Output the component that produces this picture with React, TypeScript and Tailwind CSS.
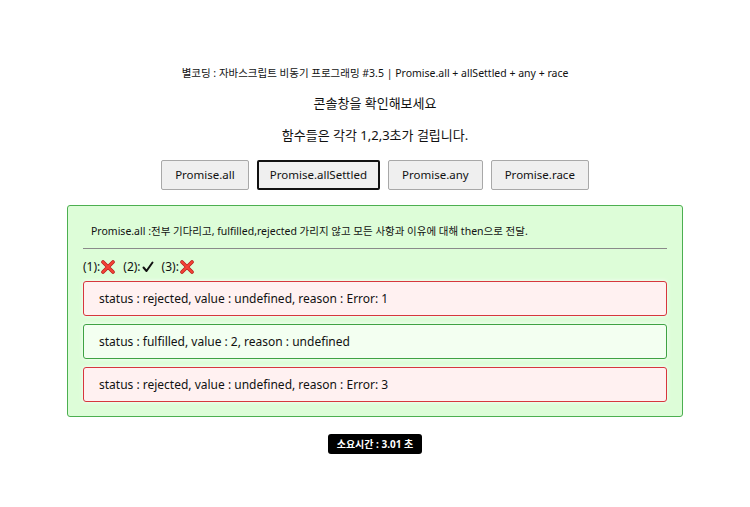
import React from "react";

interface Result {
  ok: boolean;
  text: string;
}

const results: Result[] = [
  { ok: false, text: "status : rejected, value : undefined, reason : Error: 1" },
  { ok: true, text: "status : fulfilled, value : 2, reason : undefined" },
  { ok: false, text: "status : rejected, value : undefined, reason : Error: 3" },
];

const buttons = ["Promise.all", "Promise.allSettled", "Promise.any", "Promise.race"];

const Cross = () => (
  <svg width="14" height="14" viewBox="0 0 14 14" className="inline-block">
    <path d="M2 2 L12 12 M12 2 L2 12" stroke="#b71c1c" strokeWidth="3.6" strokeLinecap="round" />
    <path d="M2 2 L12 12 M12 2 L2 12" stroke="#f44336" strokeWidth="2.2" strokeLinecap="round" />
  </svg>
);

const Check = () => (
  <svg width="12" height="12" viewBox="0 0 12 12" className="inline-block">
    <path d="M1.5 6.5 L4.5 10 L10.5 1.5" stroke="#111" strokeWidth="2" fill="none" strokeLinecap="round" strokeLinejoin="round" />
  </svg>
);

export default function App() {
  return (
    <div
      className="w-[750px] h-[507px] bg-white text-[#111] flex flex-col items-center"
      style={{ fontFamily: '"Noto Sans", "Noto Sans CJK KR", sans-serif' }}
    >
      <div className="mt-[64px] text-[10.5px] leading-[18px]">
        별코딩 : 자바스크립트 비동기 프로그래밍 #3.5 | Promise.all + allSettled + any + race
      </div>
      <div className="mt-[11px] text-[13px] leading-[20px]">콘솔창을 확인해보세요</div>
      <div className="mt-[12px] text-[13px] leading-[20px]">함수들은 각각 1,2,3초가 걸립니다.</div>

      <div className="mt-[15px] flex gap-[8px]">
        {buttons.map((b, i) => (
          <button
            key={b}
            className={`h-[30px] text-[11.5px] bg-[#efefef] rounded-[2px] ${
              i === 1 ? "px-[11px] border-2 border-[#111]" : "px-[13px] border border-[#a8a8a8]"
            }`}
          >
            {b}
          </button>
        ))}
      </div>

      <div className="mt-[15px] w-[616px] h-[212px] bg-[#ddfdd8] border border-[#4caf50] rounded-[3px] px-[15px] pt-[16px]">
        <div className="pl-[8px] text-[10.5px] leading-[18px]">
          Promise.all :전부 기다리고, fulfilled,rejected 가리지 않고 모든 사항과 이유에 대해 then으로 전달.
        </div>
        <div className="mt-[8px] border-t border-[#8a8a8a]" />
        <div className="mt-[9px] flex items-center gap-[8px] text-[12px] leading-[18px]">
          <span className="flex items-center gap-[1px]">
            (1):<Cross />
          </span>
          <span className="flex items-center gap-[1px]">
            (2):<Check />
          </span>
          <span className="flex items-center gap-[1px]">
            (3):<Cross />
          </span>
        </div>
        <div className="mt-[5px] flex flex-col gap-[8px]">
          {results.map((r, i) => (
            <div
              key={i}
              className={`h-[35px] flex items-center px-[15px] text-[12px] rounded-[3px] border shadow-[0_0_4px_rgba(255,255,255,0.9)] ${
                r.ok ? "bg-[#f3fff1] border-[#3fa244]" : "bg-[#fff1f1] border-[#d6373d]"
              }`}
            >
              {r.text}
            </div>
          ))}
        </div>
      </div>

      <div className="mt-[17px] h-[20px] px-[9px] flex items-center bg-black text-white text-[10px] font-bold rounded-[3px]">
        소요시간 : 3.01 초
      </div>
    </div>
  );
}
